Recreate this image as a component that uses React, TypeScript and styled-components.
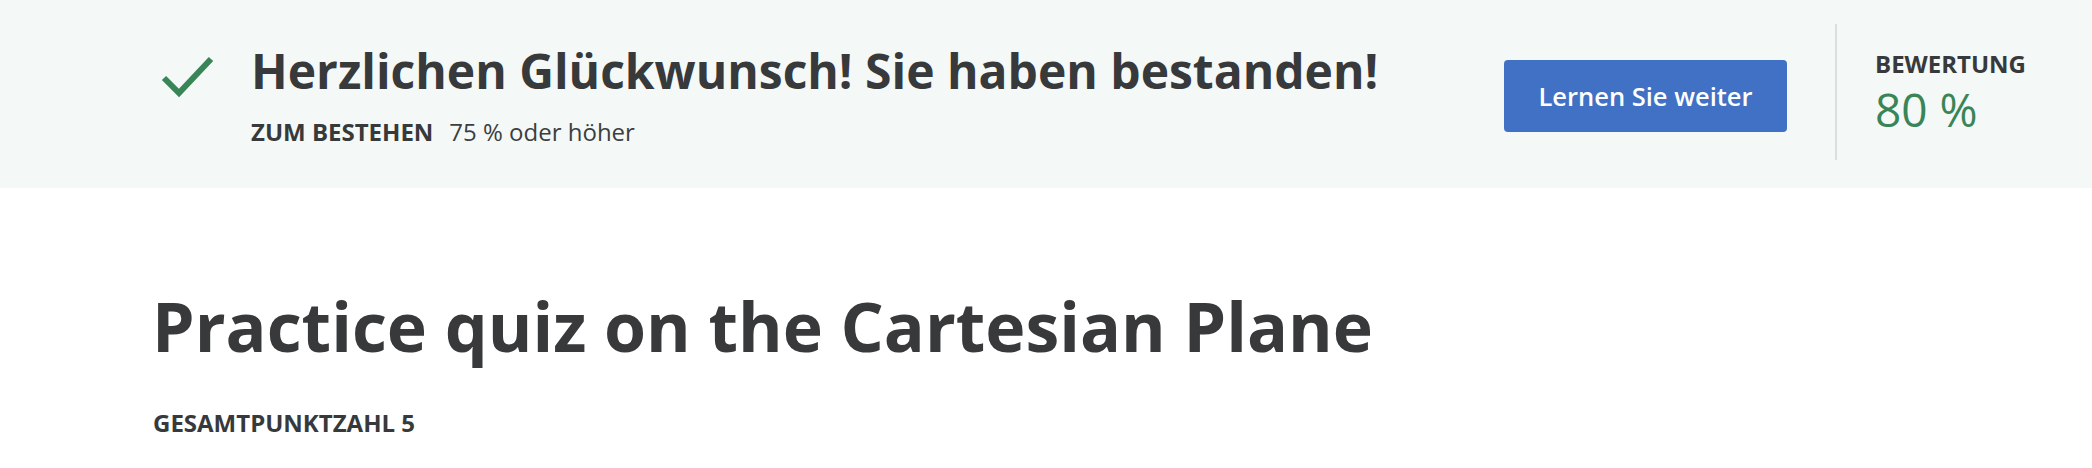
import React from "react";
import styled, { createGlobalStyle } from "styled-components";

const GlobalStyle = createGlobalStyle`
  html, body {
    margin: 0;
    padding: 0;
    background: #ffffff;
    font-family: "Open Sans", "Liberation Sans", sans-serif;
    color: #37393b;
  }
  * { box-sizing: border-box; }
`;

const Page = styled.div`
  width: 100%;
`;

const Banner = styled.section`
  height: 188px;
  background: #f4f8f7;
  display: flex;
  align-items: center;
  justify-content: space-between;
  padding: 0 69px 0 154px;
`;

const ResultGroup = styled.div`
  display: flex;
  align-items: flex-start;
  gap: 37px;
`;

const CheckIcon = styled.svg`
  width: 60px;
  height: 60px;
  flex: none;
  margin-top: 6px;
`;

const ResultText = styled.div`
  display: flex;
  flex-direction: column;
  gap: 15px;
`;

const Headline = styled.h1`
  margin: 0;
  font-size: 48px;
  line-height: 60px;
  font-weight: 700;
  color: #37393b;
`;

const PassLine = styled.div`
  display: flex;
  align-items: baseline;
  gap: 16px;
  font-size: 24px;
  line-height: 32px;
`;

const Label = styled.span`
  font-weight: 700;
  text-transform: uppercase;
  color: #37393b;
`;

const Value = styled.span`
  font-weight: 400;
  color: #3c3e40;
`;

const ActionGroup = styled.div`
  display: flex;
  align-items: center;
`;

const ContinueButton = styled.button`
  height: 72px;
  width: 283px;
  margin-top: 4px;
  border: none;
  border-radius: 4px;
  background: #4071c5;
  color: #ffffff;
  font-family: "Open Sans", "Liberation Sans", sans-serif;
  font-size: 25.5px;
  font-weight: 600;
  cursor: pointer;
`;

const Divider = styled.div`
  width: 2px;
  height: 136px;
  background: #dcdedf;
  margin: 0 38px 4px 48px;
`;

const Score = styled.div`
  width: 148px;
  margin-bottom: 4px;
  display: flex;
  flex-direction: column;
  gap: 2px;
`;

const ScoreLabel = styled.div`
  font-size: 24px;
  line-height: 32px;
  font-weight: 700;
  color: #37393b;
  white-space: nowrap;
`;

const ScoreValue = styled.div`
  font-size: 46px;
  line-height: 55px;
  font-weight: 400;
  color: #398557;
  white-space: nowrap;
`;

const Content = styled.main`
  padding: 97px 0 0 153px;
  display: flex;
  flex-direction: column;
  gap: 40px;
`;

const Title = styled.h2`
  margin: 0 0 0 -1px;
  font-size: 68px;
  line-height: 82px;
  font-weight: 700;
  color: #37393b;
`;

const Total = styled.div`
  font-size: 24px;
  line-height: 32px;
  font-weight: 700;
  color: #37393b;
`;

export default function App() {
  return (
    <Page>
      <GlobalStyle />
      <Banner>
        <ResultGroup>
          <CheckIcon viewBox="0 0 60 60" aria-hidden="true">
            <polyline
              points="10,31 25,46 57,12"
              fill="none"
              stroke="#398557"
              strokeWidth="6"
              strokeLinecap="butt"
              strokeLinejoin="miter"
            />
          </CheckIcon>
          <ResultText>
            <Headline>Herzlichen Glückwunsch! Sie haben bestanden!</Headline>
            <PassLine>
              <Label>Zum Bestehen</Label>
              <Value>75 % oder höher</Value>
            </PassLine>
          </ResultText>
        </ResultGroup>
        <ActionGroup>
          <ContinueButton>Lernen Sie weiter</ContinueButton>
          <Divider />
          <Score>
            <ScoreLabel>BEWERTUNG</ScoreLabel>
            <ScoreValue>80 %</ScoreValue>
          </Score>
        </ActionGroup>
      </Banner>
      <Content>
        <Title>Practice quiz on the Cartesian Plane</Title>
        <Total>GESAMTPUNKTZAHL 5</Total>
      </Content>
    </Page>
  );
}
